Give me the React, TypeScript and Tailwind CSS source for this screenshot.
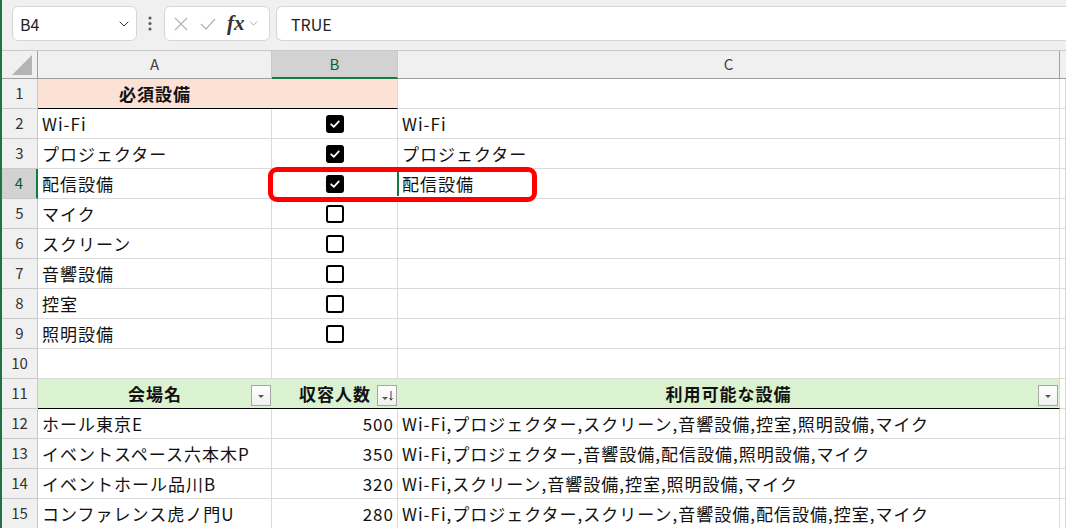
import { ChevronDown } from "lucide-react";

const font = "font-['Noto_Sans_CJK_JP',sans-serif]";

const cols = "grid grid-cols-[36px_234px_126px_662px_1fr]";
const grid = "border-r border-b border-[#DADADA]";

function FilterButton({ sorted = false }: { sorted?: boolean }) {
  return (
    <div className="absolute right-[1px] top-[6px] flex h-[21px] w-[20px] items-center justify-center border border-[#A6A6A6] bg-gradient-to-b from-white to-[#F0F0F0]">
      <svg width="16" height="16" viewBox="0 0 16 16">
        {sorted ? (
          <>
            <path d="M3 9h6l-3 3z" fill="#555" />
            <path d="M12 3v9M10.5 10l1.5 2.2 1.5-2.2" stroke="#444" strokeWidth="1" fill="none" />
          </>
        ) : (
          <path d="M5 7h6l-3 3z" fill="#555" />
        )}
      </svg>
    </div>
  );
}

function Checkbox({ checked }: { checked: boolean }) {
  if (checked) {
    return (
      <div className="flex h-[18px] w-[18px] items-center justify-center rounded-[3px] bg-black">
        <svg width="12" height="12" viewBox="0 0 12 12">
          <path d="M2.2 6.3l2.6 2.5 5-5.4" stroke="white" strokeWidth="1.8" fill="none" strokeLinecap="round" strokeLinejoin="round" />
        </svg>
      </div>
    );
  }
  return <div className="h-[18px] w-[18px] rounded-[3px] border-2 border-black" />;
}

function RowHead({ n, active = false }: { n: number; active?: boolean }) {
  return (
    <div
      className={`flex items-center justify-center border-b text-[15px] font-normal tracking-normal ${
        active
          ? "border-b-[#C9C9C9] border-r-2 border-r-[#107C41] bg-[#D2D2D2] text-[#0E5C2F]"
          : "border-r border-[#C9C9C9] bg-[#F0F0F0] text-[#333]"
      }`}
    >
      {n}
    </div>
  );
}

const checklist: [string, boolean, string][] = [
  ["Wi-Fi", true, "Wi-Fi"],
  ["プロジェクター", true, "プロジェクター"],
  ["配信設備", true, "配信設備"],
  ["マイク", false, ""],
  ["スクリーン", false, ""],
  ["音響設備", false, ""],
  ["控室", false, ""],
  ["照明設備", false, ""],
];

const venues: [string, number, string][] = [
  ["ホール東京E", 500, "Wi-Fi,プロジェクター,スクリーン,音響設備,控室,照明設備,マイク"],
  ["イベントスペース六本木P", 350, "Wi-Fi,プロジェクター,音響設備,配信設備,照明設備,マイク"],
  ["イベントホール品川B", 320, "Wi-Fi,スクリーン,音響設備,控室,照明設備,マイク"],
  ["コンファレンス虎ノ門U", 280, "Wi-Fi,プロジェクター,スクリーン,音響設備,配信設備,控室,マイク"],
];

export default function App() {
  return (
    <div className={`relative flex h-[528px] w-[1066px] overflow-hidden bg-white text-[17px] tracking-[1px] text-[#111] ${font}`}>
      <div className="w-[2px] shrink-0 bg-[#217346]" />
      <div className="flex min-w-0 flex-1 flex-col">
        {/* formula bar */}
        <div className="flex h-[50px] shrink-0 items-start bg-[#F0F0F0] pl-[10px] pt-[6px] tracking-normal">
          <div className="flex h-[35px] w-[125px] items-center justify-between rounded-[6px] border border-[#D6D6D6] bg-white pl-[7px] pr-[4px] text-[16px] text-[#222]">
            B4
            <ChevronDown size={16} strokeWidth={1.5} className="text-[#333]" />
          </div>
          <svg width="6" height="35" viewBox="0 0 6 35" className="ml-[10px]">
            <circle cx="3" cy="12" r="1.5" fill="#555" />
            <circle cx="3" cy="17.5" r="1.5" fill="#555" />
            <circle cx="3" cy="23" r="1.5" fill="#555" />
          </svg>
          <div className="ml-[11px] flex h-[35px] w-[106px] items-center rounded-[6px] border border-[#D6D6D6] bg-white pl-[7px]">
            <svg width="18" height="18" viewBox="0 0 18 18">
              <path d="M3 3l12 12M15 3L3 15" stroke="#B5B5B5" strokeWidth="1.3" />
            </svg>
            <svg width="20" height="18" viewBox="0 0 20 18" className="ml-[8px]">
              <path d="M3 9l5 5 9-10" stroke="#B5B5B5" strokeWidth="1.3" fill="none" />
            </svg>
            <span className="ml-[9px] font-['Liberation_Serif',serif] text-[21px] font-bold italic text-[#333]">fx</span>
            <ChevronDown size={13} strokeWidth={1.5} className="ml-[2px] text-[#999]" />
          </div>
          <div className="ml-[6px] flex h-[35px] flex-1 items-center rounded-l-[6px] border border-r-0 border-[#D6D6D6] bg-white pl-[14px] text-[16px] text-[#222]">
            TRUE
          </div>
        </div>

        {/* column headers */}
        <div className={`${cols} h-[29px] shrink-0 border-t border-[#C9C9C9] bg-[#F0F0F0] text-[15px] tracking-normal text-[#444]`}>
          <div className="relative border-r border-b border-[#9E9E9E]">
            <svg width="24" height="22" viewBox="0 0 24 22" className="absolute bottom-[2px] right-[3px]">
              <path d="M22 1v20H2z" fill="#B4B4B4" />
            </svg>
          </div>
          <div className="flex items-center justify-center border-r border-b border-r-[#C9C9C9] border-b-[#9E9E9E]">A</div>
          <div className="flex items-center justify-center border-r border-b-2 border-r-[#C9C9C9] border-b-[#107C41] bg-[#D2D2D2] text-[#0E5C2F]">B</div>
          <div className="flex items-center justify-center border-r border-b border-r-[#9E9E9E] border-b-[#9E9E9E]">C</div>
          <div className="border-b border-[#9E9E9E]" />
        </div>

        {/* row 1 */}
        <div className={`${cols} h-[30px] shrink-0`}>
          <RowHead n={1} />
          <div className="flex items-center justify-center border-b border-black bg-[#FBE2D5] font-bold">必須設備</div>
          <div className="border-r border-b border-r-[#DADADA] border-b-black bg-[#FBE2D5]" />
          <div className={grid} />
          <div className={grid} />
        </div>

        {/* rows 2-9 */}
        {checklist.map(([name, checked, result], i) => (
          <div key={i} className={`${cols} h-[30px] shrink-0`}>
            <RowHead n={i + 2} active={i === 2} />
            <div className={`${grid} flex items-center pl-[4px]`}>{name}</div>
            <div className={`${grid} relative flex items-center justify-center`}>
              <Checkbox checked={checked} />
              {i === 2 && (
                <div className="absolute -bottom-[1px] -right-[2px] -top-[1px] w-[2px] bg-[#107C41]">
                  <div className="absolute -bottom-[2px] -left-[1px] h-[5px] w-[5px] border border-white bg-[#107C41]" />
                </div>
              )}
            </div>
            <div className={`${grid} flex items-center pl-[4px]`}>{result}</div>
            <div className={grid} />
          </div>
        ))}

        {/* row 10 */}
        <div className={`${cols} h-[30px] shrink-0`}>
          <RowHead n={10} />
          <div className={grid} />
          <div className={grid} />
          <div className={grid} />
          <div className={grid} />
        </div>

        {/* row 11 table header */}
        <div className={`${cols} h-[30px] shrink-0`}>
          <RowHead n={11} />
          <div className="relative flex items-center justify-center border-b border-black bg-[#DAF2D0] font-bold">
            会場名
            <FilterButton />
          </div>
          <div className="relative flex items-center justify-center border-b border-black bg-[#DAF2D0] font-bold">
            収容人数
            <FilterButton sorted />
          </div>
          <div className="relative flex items-center justify-center border-r border-b border-r-[#DADADA] border-b-black bg-[#DAF2D0] font-bold">
            利用可能な設備
            <FilterButton />
          </div>
          <div className={grid} />
        </div>

        {/* rows 12-15 */}
        {venues.map(([name, cap, equip], i) => (
          <div key={i} className={`${cols} h-[30px] shrink-0`}>
            <RowHead n={i + 12} />
            <div className={`${grid} flex items-center pl-[4px]`}>{name}</div>
            <div className={`${grid} flex items-center justify-end pr-[3px]`}>{cap}</div>
            <div className={`${grid} flex items-center whitespace-nowrap pl-[4px]`}>{equip}</div>
            <div className={grid} />
          </div>
        ))}
      </div>

      {/* annotation */}
      <div className="absolute left-[268px] top-[167px] h-[35px] w-[269px] rounded-[9px] border-[5px] border-[#FF0000]" />
    </div>
  );
}
